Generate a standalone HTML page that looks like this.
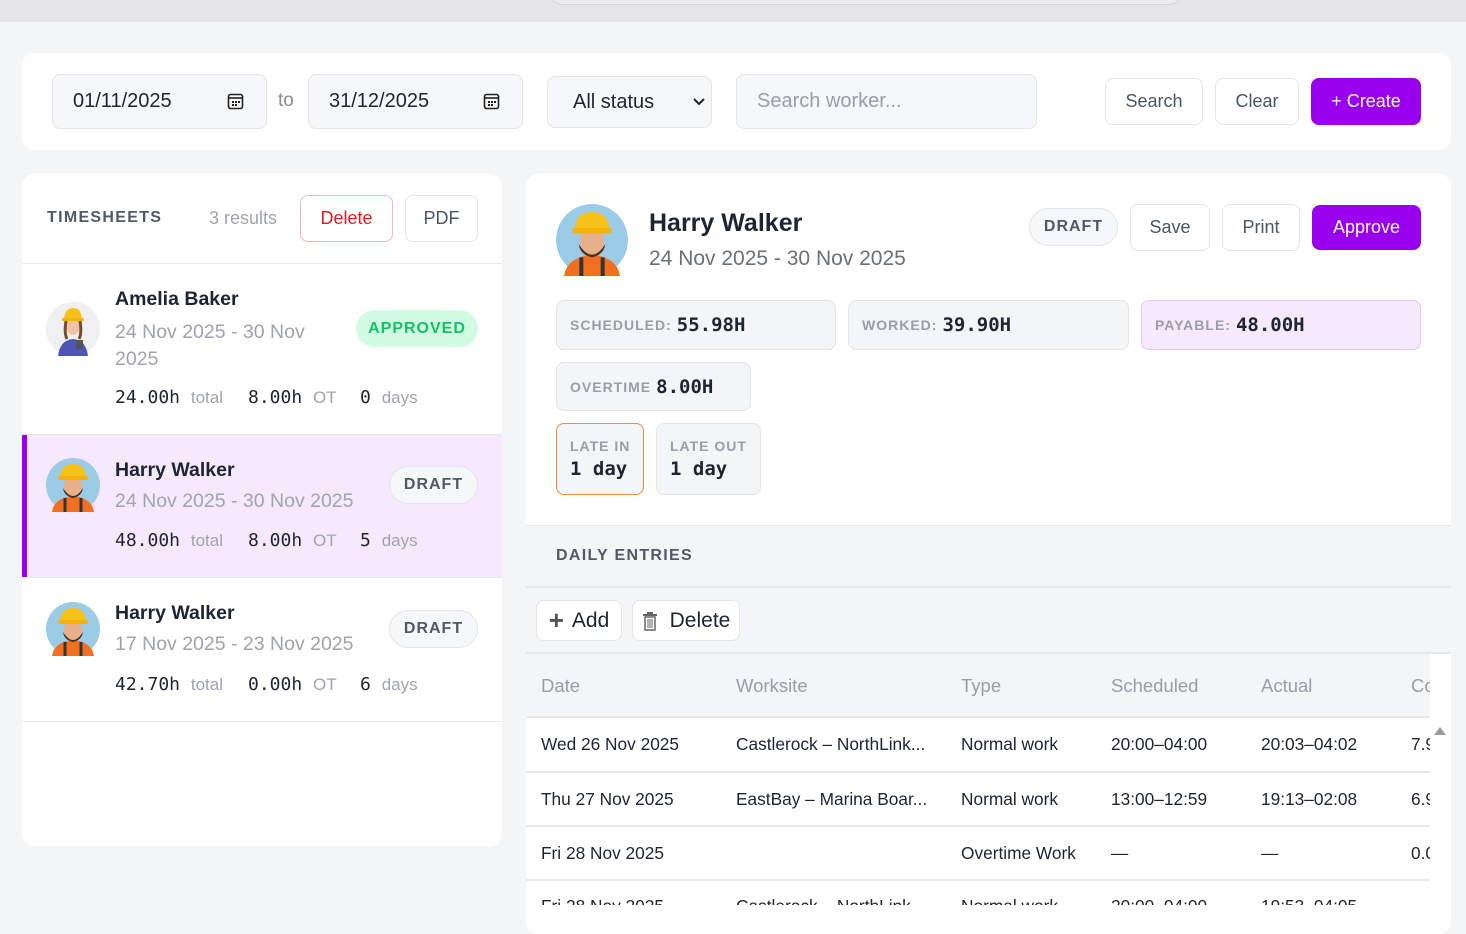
<!DOCTYPE html>
<html><head><meta charset="utf-8"><style>
*{box-sizing:border-box;margin:0;padding:0}
body{width:1466px;height:905px;overflow:hidden;background:#f4f5f7;font-family:"Liberation Sans",sans-serif;color:#1f2433;position:relative}
.mono{font-family:"DejaVu Sans Mono","Liberation Mono",monospace}
.abs{position:absolute}
.topbar{left:0;top:0;width:1466px;height:22px;background:#e6e6ea}
.pill{left:550px;top:-20px;width:632px;height:25px;border:1px solid #d4d4d8;border-radius:14px;background:#ececef}
.card{background:#fff;border-radius:12px}
.inp{background:#f6f7f9;border:1px solid #e3e5ea;border-radius:8px;font-size:20px;color:#1f2433;display:flex;align-items:center;padding-left:20px}
.btn{border:1px solid #e3e5ea;border-radius:8px;background:#fff;font-size:18px;color:#4b5563;display:flex;align-items:center;justify-content:center}
.prim{background:#9900ee;color:#fff;border:none}
.badge{border-radius:20px;font-size:16px;font-weight:bold;letter-spacing:1px;display:flex;align-items:center;justify-content:center}
.draft{background:#f6f7f9;border:1px solid #e3e5ea;color:#525866}
.name{font-size:19.5px;font-weight:bold;color:#1f2433}
.sub{font-size:19.5px;color:#a0a3ad}
.stat{font-size:18px}
.stat b{font-weight:normal;color:#1f2433}
.stat span{color:#a0a3ad;font-family:"Liberation Sans",sans-serif;font-size:17px}
.box{background:#f4f5f7;border:1px solid #e3e5ea;border-radius:8px;display:flex;align-items:center;padding-left:13px;font-size:14px;color:#9a9ca6;letter-spacing:1px;font-weight:bold}
.box .v{font-family:"DejaVu Sans Mono",monospace;color:#1f2433;font-size:19px;letter-spacing:0;margin-left:5px}
.th{font-size:18.5px;color:#9a9ca6}
.td{font-size:17.3px;color:#1f2433}
</style></head><body>
<div class="abs topbar"></div>
<div class="abs pill"></div>

<div class="abs card" style="left:22px;top:53px;width:1429px;height:97px"></div>
<div class="abs inp" style="left:52px;top:74px;width:215px;height:55px">01/11/2025
<svg class="abs" style="left:174px;top:18px" width="17" height="17" viewBox="0 0 17 17"><rect x="1.5" y="1.5" width="14" height="14" rx="2" fill="none" stroke="#222" stroke-width="1.6"/><line x1="1.5" y1="5" x2="15.5" y2="5" stroke="#222" stroke-width="1.6"/><rect x="5" y="8" width="2" height="2" fill="#222"/><rect x="8" y="8" width="2" height="2" fill="#222"/><rect x="11" y="8" width="2" height="2" fill="#222"/><rect x="5" y="11" width="2" height="2" fill="#222"/><rect x="8" y="11" width="2" height="2" fill="#222"/></svg></div>
<div class="abs" style="left:278px;top:90px;font-size:19px;color:#8a8d96">to</div>
<div class="abs inp" style="left:308px;top:74px;width:215px;height:55px">31/12/2025
<svg class="abs" style="left:174px;top:18px" width="17" height="17" viewBox="0 0 17 17"><rect x="1.5" y="1.5" width="14" height="14" rx="2" fill="none" stroke="#222" stroke-width="1.6"/><line x1="1.5" y1="5" x2="15.5" y2="5" stroke="#222" stroke-width="1.6"/><rect x="5" y="8" width="2" height="2" fill="#222"/><rect x="8" y="8" width="2" height="2" fill="#222"/><rect x="11" y="8" width="2" height="2" fill="#222"/><rect x="5" y="11" width="2" height="2" fill="#222"/><rect x="8" y="11" width="2" height="2" fill="#222"/></svg></div>
<div class="abs inp" style="left:547px;top:76px;width:165px;height:52px;padding-left:25px">All status
<svg class="abs" style="left:144px;top:20px" width="14" height="10" viewBox="0 0 14 10"><path d="M2 2l5 5 5-5" fill="none" stroke="#222" stroke-width="2"/></svg></div>
<div class="abs inp" style="left:736px;top:74px;width:301px;height:55px;color:#9a9ca6">Search worker...</div>
<div class="abs btn" style="left:1105px;top:78px;width:98px;height:47px">Search</div>
<div class="abs btn" style="left:1215px;top:78px;width:84px;height:47px">Clear</div>
<div class="abs btn prim" style="left:1311px;top:78px;width:110px;height:47px">+ Create</div>

<!-- left -->
<div class="abs card" style="left:22px;top:174px;width:480px;height:672px"></div>
<div class="abs" style="left:47px;top:209px;font-size:16px;font-weight:bold;letter-spacing:1.3px;color:#525866">TIMESHEETS</div>
<div class="abs" style="left:209px;top:208px;font-size:18px;color:#a0a3ad">3 results</div>
<div class="abs btn" style="left:300px;top:195px;width:93px;height:47px;border-color:#f3b6b6;color:#e01b1b">Delete</div>
<div class="abs btn" style="left:405px;top:195px;width:73px;height:47px">PDF</div>
<div class="abs" style="left:22px;top:263px;width:480px;height:1px;background:#e6e7eb"></div>

<svg width="0" height="0" style="position:absolute"><defs>
<g id="man"><circle cx="27" cy="27" r="27" fill="#9ccbe8"/><path d="M6 54 Q8 40 27 38 Q46 40 48 54Z" fill="#f07020"/><path d="M19 40 v14 M35 40 v14" stroke="#333" stroke-width="3"/><ellipse cx="27" cy="28" rx="9" ry="11" fill="#e8b08a"/><path d="M17 30 Q27 46 37 30 Q36 38 27 40 Q18 38 17 30Z" fill="#4a2e1e"/><path d="M14 19 Q15 6 27 6 Q39 6 40 19Z" fill="#f6c21a"/><rect x="12" y="18" width="30" height="4" rx="2" fill="#f6b10a"/></g>
<g id="woman"><circle cx="27" cy="27" r="27" fill="#f0f0f2"/><path d="M12 54 Q14 38 27 37 Q40 38 42 54Z" fill="#4d56b8"/><ellipse cx="27" cy="24" rx="7" ry="9" fill="#f0c4a0"/><path d="M18 17 Q19 6 27 6 Q35 6 36 17Z" fill="#f6c21a"/><rect x="16" y="16" width="22" height="3" rx="1.5" fill="#f6b10a"/><path d="M20 19 q-2 12 1 18 M34 19 q2 12 -1 18" stroke="#7a4a2a" stroke-width="3" fill="none"/><rect x="30" y="38" width="7" height="9" fill="#555"/></g>
</defs></svg>

<svg class="abs" style="left:46px;top:302px" width="54" height="54"><use href="#woman"/></svg>
<div class="abs name" style="left:115px;top:288px">Amelia Baker</div>
<div class="abs sub" style="left:115px;top:319px;line-height:27px">24 Nov 2025 - 30 Nov<br>2025</div>
<div class="abs badge" style="left:356px;top:310px;width:122px;height:37px;background:#d2fbe4;color:#12c366">APPROVED</div>
<div class="abs stat mono" style="left:115px;top:387px"><b>24.00h</b> <span>total</span></div>
<div class="abs stat mono" style="left:248px;top:387px"><b>8.00h</b> <span>OT</span></div>
<div class="abs stat mono" style="left:360px;top:387px"><b>0</b> <span>days</span></div>
<div class="abs" style="left:22px;top:434px;width:480px;height:1px;background:#e6e7eb"></div>

<div class="abs" style="left:22px;top:435px;width:480px;height:142px;background:#f6e9fd;border-left:5px solid #9900ee"></div>
<svg class="abs" style="left:46px;top:458px" width="54" height="54"><use href="#man"/></svg>
<div class="abs name" style="left:115px;top:459px">Harry Walker</div>
<div class="abs sub" style="left:115px;top:490px">24 Nov 2025 - 30 Nov 2025</div>
<div class="abs badge draft" style="left:389px;top:466px;width:89px;height:38px">DRAFT</div>
<div class="abs stat mono" style="left:115px;top:530px"><b>48.00h</b> <span>total</span></div>
<div class="abs stat mono" style="left:248px;top:530px"><b>8.00h</b> <span>OT</span></div>
<div class="abs stat mono" style="left:360px;top:530px"><b>5</b> <span>days</span></div>
<div class="abs" style="left:22px;top:577px;width:480px;height:1px;background:#e6e7eb"></div>

<svg class="abs" style="left:46px;top:602px" width="54" height="54"><use href="#man"/></svg>
<div class="abs name" style="left:115px;top:602px">Harry Walker</div>
<div class="abs sub" style="left:115px;top:633px">17 Nov 2025 - 23 Nov 2025</div>
<div class="abs badge draft" style="left:389px;top:610px;width:89px;height:38px">DRAFT</div>
<div class="abs stat mono" style="left:115px;top:674px"><b>42.70h</b> <span>total</span></div>
<div class="abs stat mono" style="left:248px;top:674px"><b>0.00h</b> <span>OT</span></div>
<div class="abs stat mono" style="left:360px;top:674px"><b>6</b> <span>days</span></div>
<div class="abs" style="left:22px;top:721px;width:480px;height:1px;background:#e6e7eb"></div>

<!-- right -->
<div class="abs card" style="left:526px;top:174px;width:925px;height:760px"></div>
<svg class="abs" style="left:556px;top:204px" width="72" height="72" viewBox="0 0 54 54"><use href="#man"/></svg>
<div class="abs" style="left:649px;top:209px;font-size:25px;font-weight:bold">Harry Walker</div>
<div class="abs" style="left:649px;top:247px;font-size:21px;color:#6b6f7a">24 Nov 2025 - 30 Nov 2025</div>
<div class="abs badge draft" style="left:1029px;top:208px;width:89px;height:38px">DRAFT</div>
<div class="abs btn" style="left:1130px;top:204px;width:80px;height:47px">Save</div>
<div class="abs btn" style="left:1222px;top:204px;width:78px;height:47px">Print</div>
<div class="abs btn prim" style="left:1312px;top:205px;width:109px;height:45px">Approve</div>

<div class="abs box" style="left:556px;top:300px;width:280px;height:50px">SCHEDULED:<span class="v">55.98H</span></div>
<div class="abs box" style="left:848px;top:300px;width:281px;height:50px">WORKED:<span class="v">39.90H</span></div>
<div class="abs box" style="left:1141px;top:300px;width:280px;height:50px;background:#f6e9fd;border-color:#e9c4f9">PAYABLE:<span class="v">48.00H</span></div>
<div class="abs box" style="left:556px;top:362px;width:195px;height:49px">OVERTIME<span class="v">8.00H</span></div>
<div class="abs box" style="left:556px;top:423px;width:88px;height:72px;flex-direction:column;align-items:flex-start;justify-content:center;border-color:#f08a3c">LATE IN<span class="v" style="margin:4px 0 0">1 day</span></div>
<div class="abs box" style="left:656px;top:423px;width:105px;height:72px;flex-direction:column;align-items:flex-start;justify-content:center">LATE OUT<span class="v" style="margin:4px 0 0">1 day</span></div>

<div class="abs" style="left:526px;top:525px;width:925px;height:380px;background:#f4f5f7;border-top:1px solid #e6e7eb"></div>
<div class="abs" style="left:556px;top:547px;font-size:16px;font-weight:bold;letter-spacing:1.3px;color:#525866">DAILY ENTRIES</div>
<div class="abs" style="left:526px;top:586px;width:925px;height:2px;background:#e6e7eb"></div>
<div class="abs btn" style="left:536px;top:600px;width:86px;height:41px;font-size:21px;color:#1f2433"><span style="font-size:26px;color:#555;margin-right:8px;font-weight:bold">+</span>Add</div>
<div class="abs btn" style="left:632px;top:600px;width:108px;height:41px;font-size:21px;color:#1f2433"><svg width="16" height="20" viewBox="0 0 16 20" style="margin-right:12px"><rect x="5" y="1" width="6" height="2" fill="#666"/><rect x="1" y="3" width="14" height="2" fill="#666"/><rect x="3" y="6" width="10" height="13" fill="none" stroke="#666" stroke-width="1.5"/><path d="M6 8v9M8 8v9M10 8v9" stroke="#666"/></svg>Delete</div>
<div class="abs" style="left:526px;top:652px;width:925px;height:2px;background:#e6e7eb"></div>
<div class="abs" style="left:1430px;top:654px;width:21px;height:251px;background:#fff"></div>
<div class="abs" style="left:1434px;top:727px;width:0;height:0;border-left:6px solid transparent;border-right:6px solid transparent;border-bottom:8px solid #999"></div>
<div class="abs" style="left:526px;top:654px;width:904px;height:251px;overflow:hidden">
 <div class="abs" style="left:0;top:0;width:904px;height:62px;background:#f4f5f7"></div>
 <div class="abs th" style="left:15px;top:21px">Date</div>
 <div class="abs th" style="left:210px;top:21px">Worksite</div>
 <div class="abs th" style="left:435px;top:21px">Type</div>
 <div class="abs th" style="left:585px;top:21px">Scheduled</div>
 <div class="abs th" style="left:735px;top:21px">Actual</div>
 <div class="abs th" style="left:885px;top:21px">Co</div>
 <div class="abs" style="left:0;top:62px;width:904px;height:2px;background:#e6e7eb"></div>
 <div class="abs" style="left:0;top:64px;width:904px;height:200px;background:#fff"></div>
 <div class="abs td" style="left:15px;top:80px">Wed 26 Nov 2025</div><div class="abs td" style="left:210px;top:80px">Castlerock – NorthLink...</div><div class="abs td" style="left:435px;top:80px">Normal work</div><div class="abs td" style="left:585px;top:80px">20:00–04:00</div><div class="abs td" style="left:735px;top:80px">20:03–04:02</div><div class="abs td" style="left:885px;top:80px">7.9</div>
 <div class="abs" style="left:0;top:117px;width:904px;height:2px;background:#e6e7eb"></div>
 <div class="abs td" style="left:15px;top:135px">Thu 27 Nov 2025</div><div class="abs td" style="left:210px;top:135px">EastBay – Marina Boar...</div><div class="abs td" style="left:435px;top:135px">Normal work</div><div class="abs td" style="left:585px;top:135px">13:00–12:59</div><div class="abs td" style="left:735px;top:135px">19:13–02:08</div><div class="abs td" style="left:885px;top:135px">6.9</div>
 <div class="abs" style="left:0;top:171px;width:904px;height:2px;background:#e6e7eb"></div>
 <div class="abs td" style="left:15px;top:189px">Fri 28 Nov 2025</div><div class="abs td" style="left:435px;top:189px">Overtime Work</div><div class="abs td" style="left:585px;top:189px">—</div><div class="abs td" style="left:735px;top:189px">—</div><div class="abs td" style="left:885px;top:189px">0.0</div>
 <div class="abs" style="left:0;top:225px;width:904px;height:2px;background:#e6e7eb"></div>
 <div class="abs td" style="left:15px;top:242px">Fri 28 Nov 2025</div><div class="abs td" style="left:210px;top:242px">Castlerock – NorthLink...</div><div class="abs td" style="left:435px;top:242px">Normal work</div><div class="abs td" style="left:585px;top:242px">20:00–04:00</div><div class="abs td" style="left:735px;top:242px">19:53–04:05</div>
</div>
</body></html>
